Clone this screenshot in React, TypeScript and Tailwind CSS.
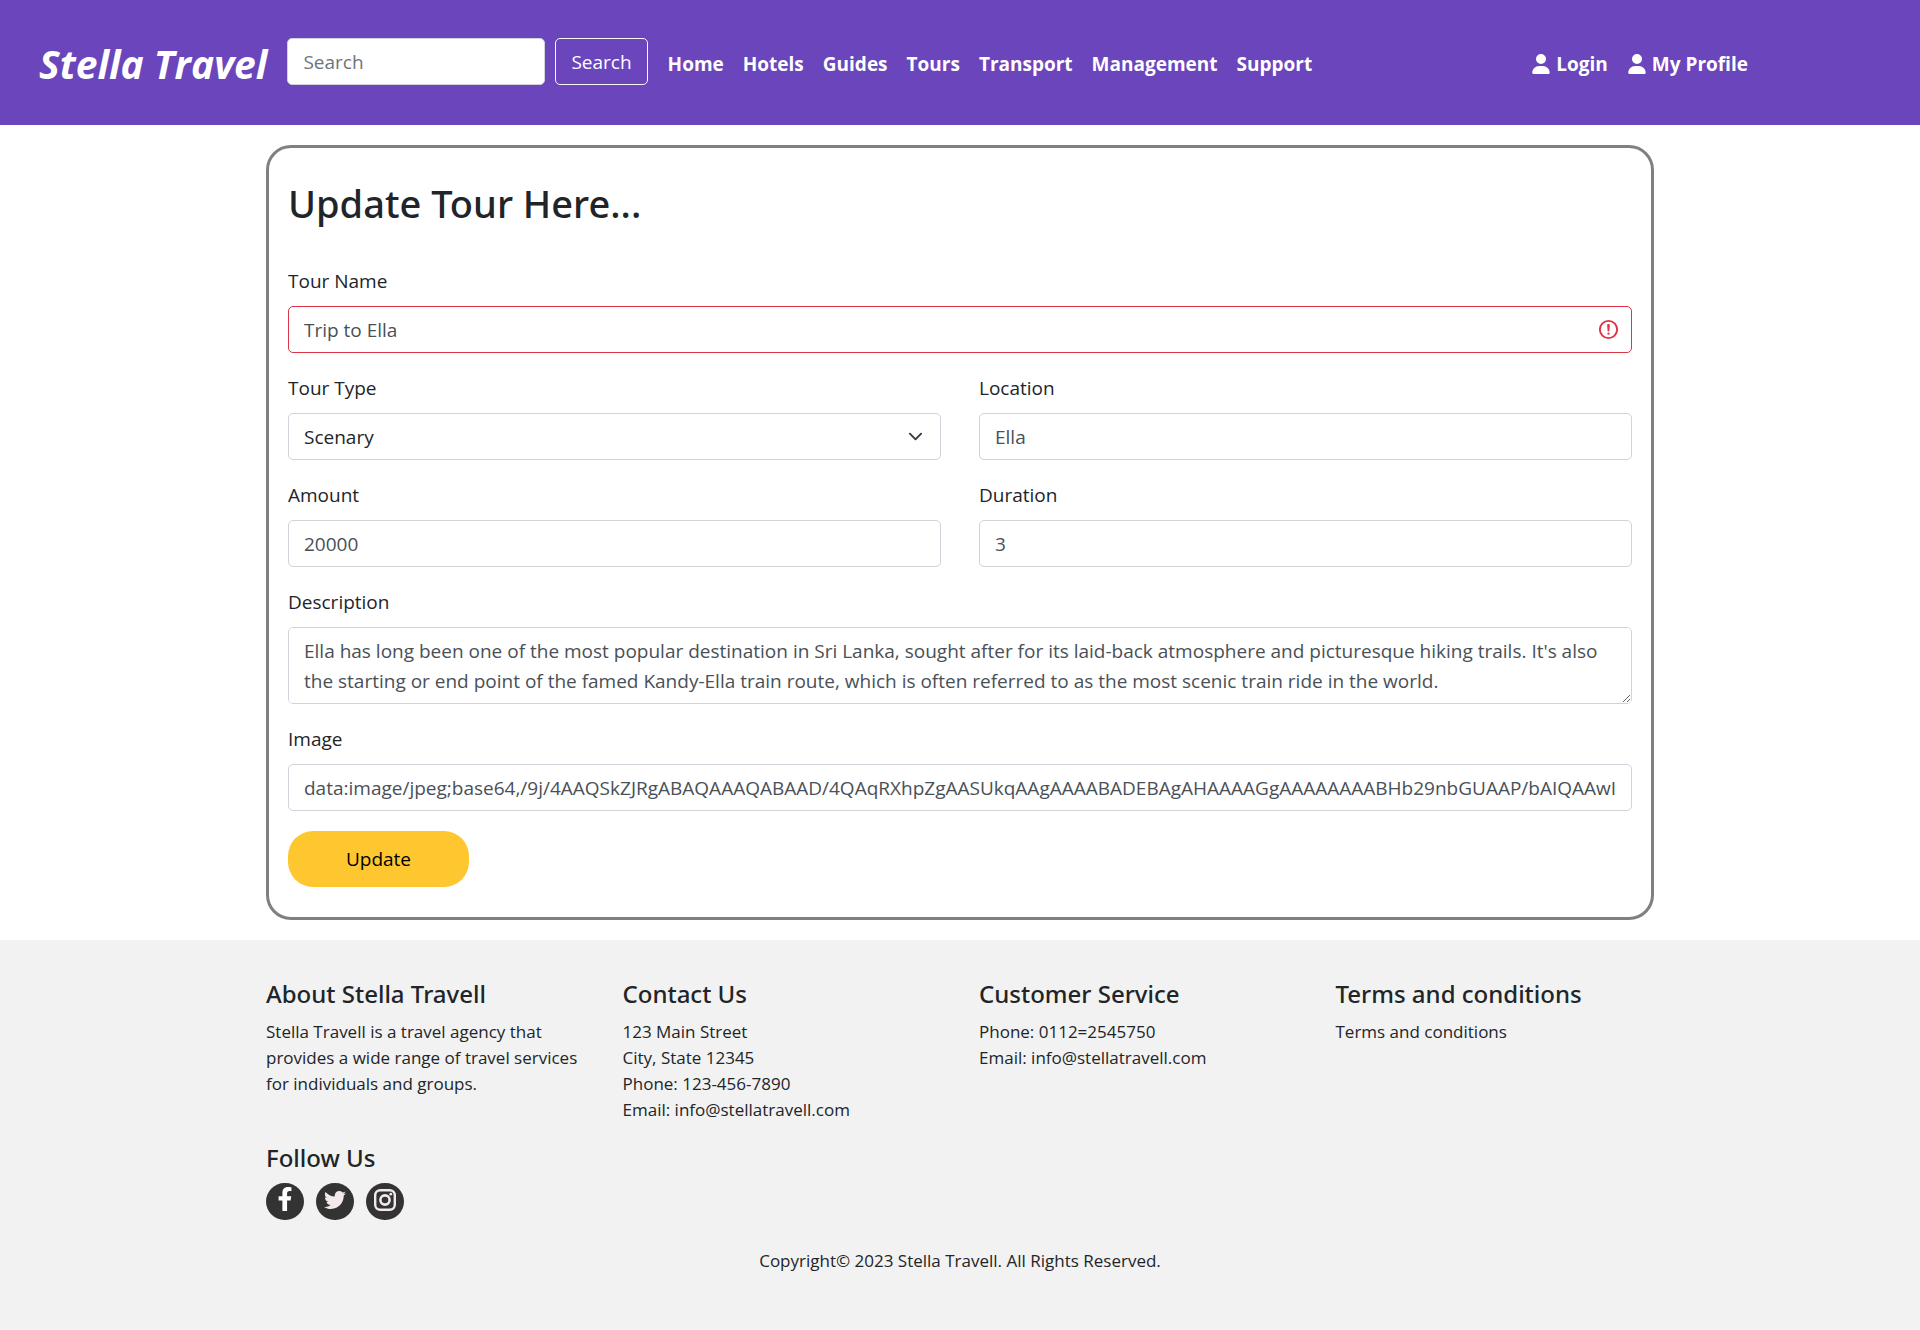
import React from "react";
import { FaFacebookF, FaTwitter } from "react-icons/fa";
import { FaUser } from "react-icons/fa6";

const NAV_LINKS = ["Home", "Hotels", "Guides", "Tours", "Transport", "Management", "Support"];

const DESCRIPTION =
  "Ella has long been one of the most popular destination in Sri Lanka, sought after for its laid-back atmosphere and picturesque hiking trails. It's also the starting or end point of the famed Kandy-Ella train route, which is often referred to as the most scenic train ride in the world.";

const IMAGE_DATA =
  "data:image/jpeg;base64,/9j/4AAQSkZJRgABAQAAAQABAAD/4QAqRXhpZgAASUkqAAgAAAABADEBAgAHAAAAGgAAAAAAAABHb29nbGUAAP/bAIQAAwICAwICAwMDAwQDAwQFCAUFBAQFCgcHBggMCgwMCwoLCw0OEhANDhEOCwsQFhARExQVFRUMDxcYFhQYEhQVFA";

const CONTROL =
  "block h-[47px] w-full rounded-[5px] border border-[#ced4da] bg-white px-[15px] text-[19px] leading-[30px] text-[#495057] outline-none";

const SECTION_TITLE = "mb-2.5 font-['Noto_Sans',sans-serif] text-[24px] leading-[30px] font-medium";

function Field({ id, label, children }: { id: string; label: string; children: React.ReactNode }) {
  return (
    <div className="min-w-0">
      <label htmlFor={id} className="mb-2.5 block leading-[30px]">
        {label}
      </label>
      {children}
    </div>
  );
}

function Header() {
  return (
    <header className="flex h-[125px] items-center bg-[#6b45bc] pr-[172px] pb-0.5 pl-[39px] text-white">
      <a href="#" className="mr-5 pt-1 text-[39px] leading-[60px] font-bold whitespace-nowrap italic">
        Stella Travel
      </a>
      <form className="flex gap-2.5" onSubmit={(e) => e.preventDefault()}>
        <input
          type="search"
          aria-label="Search"
          placeholder="Search"
          className="h-[47px] w-[258px] rounded-[5px] border border-[#ced4da] bg-white px-[15px] text-[19px] text-[#495057] outline-none placeholder:text-[#6c757d]"
        />
        <button type="submit" className="h-[47px] rounded-[5px] border border-[#f8f9fa] px-[15px] text-[19px]">
          Search
        </button>
      </form>
      <nav className="ml-5 flex flex-1 items-center justify-between pt-1 font-bold whitespace-nowrap">
        <ul className="flex gap-[19px]">
          {NAV_LINKS.map((name) => (
            <li key={name}>
              <a href="#">{name}</a>
            </li>
          ))}
        </ul>
        <ul className="flex gap-5">
          {["Login", "My Profile"].map((name) => (
            <li key={name}>
              <a href="#" className="flex items-center gap-1.5">
                <FaUser className="h-5 w-[18px]" />
                {name}
              </a>
            </li>
          ))}
        </ul>
      </nav>
    </header>
  );
}

function TourForm() {
  return (
    <form
      className="mx-auto my-5 w-full max-w-[1388px] rounded-[25px] border-3 border-[#808080] px-[19px] pt-[31px] pb-[30px]"
      onSubmit={(e) => e.preventDefault()}
    >
      <h1 className="mb-[39px] font-['Noto_Sans',sans-serif] text-[38px] leading-12 font-medium">Update Tour Here...</h1>
      <div className="flex flex-col gap-5">
        <Field id="name" label="Tour Name">
          <div className="relative">
            <input id="name" defaultValue="Trip to Ella" aria-invalid="true" className={`${CONTROL} border-[#dc3545]!`} />
            <svg
              viewBox="0 0 12 12"
              className="pointer-events-none absolute top-3 right-3 size-[23px]"
              fill="none"
              stroke="#dc3545"
            >
              <circle cx="6" cy="6" r="4.5" />
              <path strokeLinejoin="round" d="M5.8 3.6h.4L6 6.5z" />
              <circle cx="6" cy="8.2" r=".6" fill="#dc3545" stroke="none" />
            </svg>
          </div>
        </Field>
        <div className="grid grid-cols-2 gap-x-[38px] gap-y-5">
          <Field id="type" label="Tour Type">
            <div className="relative">
              <select id="type" className={`${CONTROL} appearance-none text-[#212529]!`}>
                <option>Scenary</option>
              </select>
              <svg
                viewBox="0 0 16 16"
                className="pointer-events-none absolute top-4 right-[18px] size-[15px]"
                fill="none"
                stroke="#343a40"
                strokeWidth="2"
                strokeLinecap="round"
                strokeLinejoin="round"
              >
                <path d="M2 5l6 6 6-6" />
              </svg>
            </div>
          </Field>
          <Field id="location" label="Location">
            <input id="location" defaultValue="Ella" className={CONTROL} />
          </Field>
          <Field id="amount" label="Amount">
            <input id="amount" defaultValue="20000" className={CONTROL} />
          </Field>
          <Field id="duration" label="Duration">
            <input id="duration" defaultValue="3" className={CONTROL} />
          </Field>
        </div>
        <Field id="description" label="Description">
          <textarea id="description" rows={2} defaultValue={DESCRIPTION} className={`${CONTROL} h-[77px]! resize-y py-2`} />
        </Field>
        <Field id="image" label="Image">
          <input id="image" defaultValue={IMAGE_DATA} className={CONTROL} />
        </Field>
        <button type="submit" className="h-14 w-[181px] rounded-[25px] bg-[#ffc72f] text-black">
          Update
        </button>
      </div>
    </form>
  );
}

function FooterColumn({ title, lines }: { title: string; lines: string[] }) {
  return (
    <section>
      <h2 className={SECTION_TITLE}>{title}</h2>
      {lines.map((line) => (
        <p key={line}>{line}</p>
      ))}
    </section>
  );
}

function InstagramIcon() {
  return (
    <svg viewBox="0 0 22 22" className="size-[22px]" fill="none" stroke="currentColor">
      <rect x="1.2" y="1.2" width="19.6" height="19.6" rx="5" strokeWidth="2.4" />
      <circle cx="11" cy="11" r="4.6" strokeWidth="2.6" />
      <circle cx="16.8" cy="5.2" r="1.4" fill="currentColor" stroke="none" />
    </svg>
  );
}

function Footer() {
  return (
    <footer className="flex-1 bg-[#f2f2f2] px-5 pt-[39px] text-[17px] leading-[26px]">
      <div className="mx-auto w-full max-w-[1388px]">
        <div className="grid grid-cols-4 gap-[38px]">
          <FooterColumn
            title="About Stella Travell"
            lines={["Stella Travell is a travel agency that provides a wide range of travel services for individuals and groups."]}
          />
          <FooterColumn
            title="Contact Us"
            lines={["123 Main Street", "City, State 12345", "Phone: 123-456-7890", "Email: info@stellatravell.com"]}
          />
          <FooterColumn title="Customer Service" lines={["Phone: 0112=2545750", "Email: info@stellatravell.com"]} />
          <FooterColumn title="Terms and conditions" lines={["Terms and conditions"]} />
        </div>
        <h2 className={`${SECTION_TITLE} mt-5`}>Follow Us</h2>
        <div className="flex gap-3">
          <a href="#" aria-label="Facebook" className="flex h-[37px] w-[38px] justify-center rounded-full bg-[#333] pt-1 text-white">
            <FaFacebookF className="size-6" />
          </a>
          <a href="#" aria-label="Twitter" className="flex h-[37px] w-[38px] justify-center rounded-full bg-[#333] pt-1.5 text-[#f2e9e9]">
            <FaTwitter className="size-[22px]" />
          </a>
          <a href="#" aria-label="Instagram" className="flex h-[37px] w-[38px] justify-center rounded-full bg-[#333] pt-1.5 text-[#f2e9e9]">
            <InstagramIcon />
          </a>
        </div>
        <p className="mt-7 text-center">Copyright© 2023 Stella Travell. All Rights Reserved.</p>
      </div>
    </footer>
  );
}

export default function App() {
  return (
    <div className="flex min-h-screen flex-col bg-white font-['Open_Sans',sans-serif] text-[19px] leading-[30px] text-[#212529]">
      <Header />
      <TourForm />
      <Footer />
    </div>
  );
}
